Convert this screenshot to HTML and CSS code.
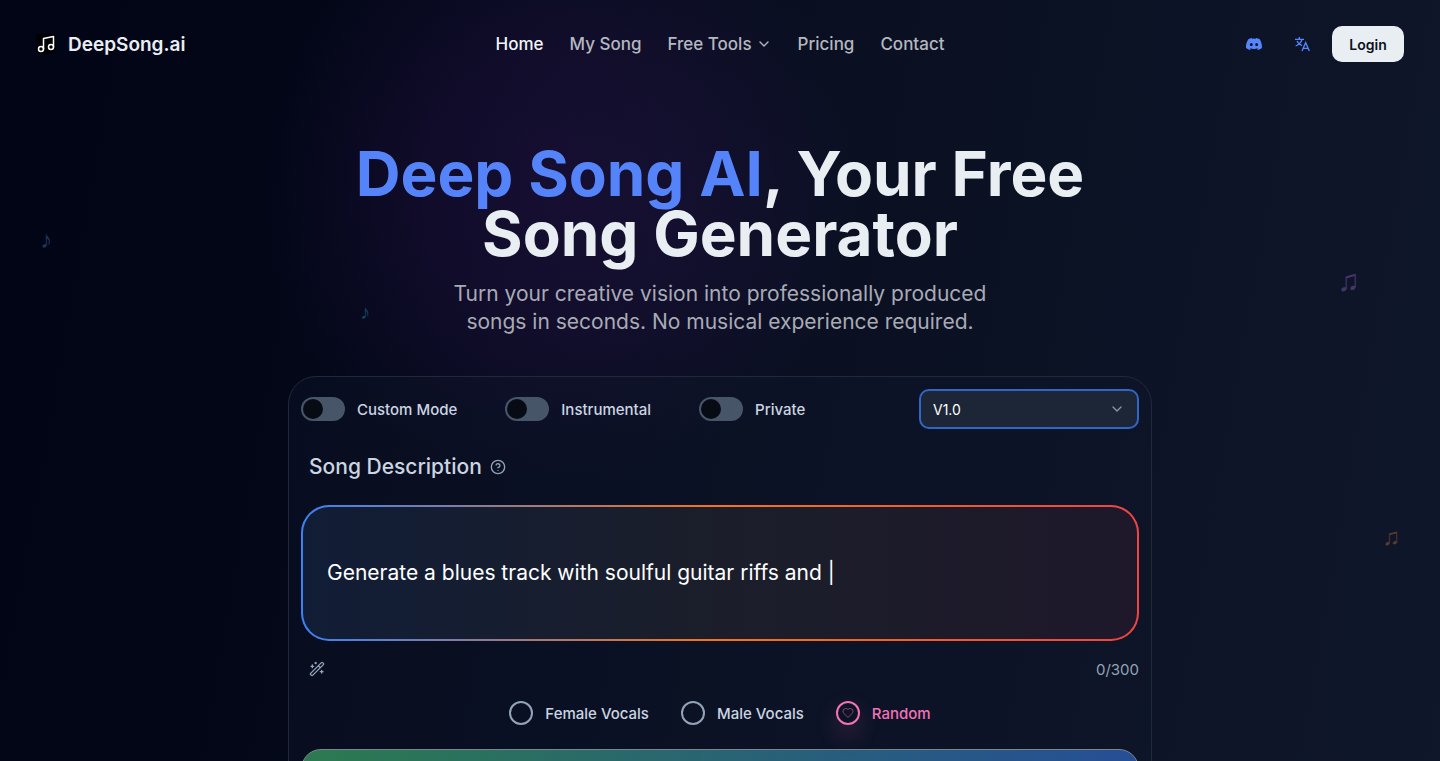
FILE: index.html
```html
<!DOCTYPE html>
<html lang="en">
    <head>
        <meta charset="utf-8">
        <meta name="viewport" content="width=device-width, initial-scale=1">
        <title>DeepSong.ai</title>
        <link rel="stylesheet" href="styles.css">
    </head>
    <body>
        <div class="page">
            <div class="glow"></div>
            <!--Floating notes-->
            <span class="note note-blue" aria-hidden="true">♪</span>
            <span class="note note-cyan" aria-hidden="true">♪</span>
            <span class="note note-purple" aria-hidden="true">♫</span>
            <span class="note note-orange" aria-hidden="true">♫</span>

            <header>
                <a class="brand" href="#">
                    <svg class="logo" viewBox="0 0 20 20" fill="none" stroke="#fff" stroke-width="1.5" stroke-linecap="round" stroke-linejoin="round">
                        <rect width="20" height="20" rx="2" fill="#000" stroke="none"/>
                        <path d="M7.5 15V4.5L17.5 2.5V13"/>
                        <circle cx="5" cy="15" r="2.5"/>
                        <circle cx="15" cy="13" r="2.5"/>
                    </svg>
                    DeepSong.ai
                </a>
                <nav>
                    <a class="active" href="#">Home</a>
                    <a href="#">My Song</a>
                    <a href="#">Free Tools
                        <svg class="chevron" viewBox="0 0 24 24"><path d="m6 9 6 6 6-6"/></svg>
                    </a>
                    <a href="#">Pricing</a>
                    <a href="#">Contact</a>
                </nav>
                <div class="actions">
                    <a class="icon-link" href="#" aria-label="Discord">
                        <svg viewBox="0 0 24 24" fill="currentColor"><path d="M20.3 4.4A19.8 19.8 0 0 0 15.4 2.9l-.6 1.2a18.3 18.3 0 0 0-5.5 0l-.6-1.2a19.7 19.7 0 0 0-4.9 1.5C.5 9-.3 13.6.1 18.1a20 20 0 0 0 6 3l1.2-2-1.9-.9.4-.3a14.200 14.200 0 0 0 12.200 0l.4.3-1.900.9 1.300 2a19.900 19.900 0 0 0 6-3c.5-5.200-.8-9.700-3.500-13.700zM8 15.300c-1.200 0-2.200-1.100-2.200-2.400s1-2.400 2.200-2.400 2.200 1.100 2.200 2.400-1 2.400-2.200 2.400zm8 0c-1.200 0-2.200-1.100-2.200-2.400s1-2.400 2.200-2.400 2.200 1.100 2.200 2.400-1 2.400-2.200 2.400z"/></svg>
                    </a>
                    <button class="icon-link" type="button" aria-label="Language">
                        <svg viewBox="0 0 24 24" fill="none" stroke="currentColor" stroke-width="2"><path d="M1.5 5H15M8 1.5V5M12 5C11 9.5 7 13 2.5 15M4.5 7.5C6 11 8.5 13 12 14.5M12 22.5 17.5 10 23 22.5M13.5 18.5H21.5"/></svg>
                    </button>
                    <button class="login" type="button">Login</button>
                </div>
            </header>

            <main>
                <h1><span>Deep Song AI</span>, Your Free<br>Song Generator</h1>
                <p class="lead">Turn your creative vision into professionally produced<br>songs in seconds. No musical experience required.</p>

                <form class="card">
                    <div class="options">
                        <label class="switch"><input type="checkbox">Custom Mode</label>
                        <label class="switch"><input type="checkbox">Instrumental</label>
                        <label class="switch"><input type="checkbox">Private</label>
                        <div class="version">
                            <select aria-label="Version">
                                <option>V1.0</option>
                            </select>
                            <svg class="chevron" viewBox="0 0 24 24"><path d="m6 9 6 6 6-6"/></svg>
                        </div>
                    </div>

                    <div class="field-title">
                        <label for="description">Song Description</label>
                        <svg viewBox="0 0 24 24" fill="none" stroke="currentColor" stroke-width="2" stroke-linecap="round" stroke-linejoin="round"><circle cx="12" cy="12" r="10"/><path d="M9.1 9a3 3 0 0 1 5.8 1c0 2-3 3-3 3M12 17h.01"/></svg>
                    </div>
                    <div class="field">
                        <textarea id="description" maxlength="300" placeholder="Generate a blues track with soulful guitar riffs and |"></textarea>
                    </div>
                    <div class="field-foot">
                        <button class="wand" type="button" aria-label="Random idea">
                            <svg viewBox="0 0 24 24" fill="none" stroke="currentColor" stroke-width="2" stroke-linecap="round" stroke-linejoin="round"><path d="m21.6 3.6-1.2-1.2a1.2 1.2 0 0 0-1.7 0L2.4 18.6a1.2 1.2 0 0 0 0 1.7l1.3 1.3a1.2 1.2 0 0 0 1.7 0L21.6 5.4a1.2 1.2 0 0 0 0-1.8M14 7l3 3M5 6v4M19 14v4M10 2v2M7 8H3M21 16h-4M11 3H9"/></svg>
                        </button>
                        <span>0/300</span>
                    </div>

                    <div class="vocals">
                        <label><input type="radio" name="vocals">Female Vocals</label>
                        <label><input type="radio" name="vocals">Male Vocals</label>
                        <label class="random">
                            <input type="radio" name="vocals" checked>
                            <svg viewBox="0 0 24 24"><path d="M19 14c1.5-1.5 3-3.2 3-5.5A5.5 5.5 0 0 0 16.5 3c-1.8 0-3 .5-4.5 2-1.5-1.5-2.7-2-4.5-2A5.5 5.5 0 0 0 2 8.5c0 2.3 1.5 4 3 5.5l7 7z"/></svg>
                            Random
                        </label>
                    </div>
                    <button class="generate" type="submit" aria-label="Generate"></button>
                </form>
            </main>
        </div>
    </body>
</html>
```
FILE: styles.css
```css
* {
    box-sizing: border-box;
}
html {
    scrollbar-width: none;
    background-color: #020617;
}
body {
    margin: 0;
    font-family: Inter, "Open Sans", sans-serif;
    font-size: 17px;
    color: #e9eef3;
}
a {
    color: inherit;
    text-decoration: none;
}
button, select, textarea {
    font: inherit;
    color: inherit;
}
.page {
    position: relative;
    overflow: hidden;
    min-height: 100vh;
    background: linear-gradient(100deg, #020516 0%, #020617 18%, #0a1022 55%, #0f172a 100%);
}
.glow {
    position: absolute;
    top: -110px;
    left: 18%;
    width: 600px;
    height: 600px;
    background: radial-gradient(closest-side, rgba(88, 28, 135, 0.2), rgba(88, 28, 135, 0.14) 45%, rgba(88, 28, 135, 0));
}
.note {
    position: absolute;
    font-family: "Liberation Sans", sans-serif;
    line-height: 1;
    opacity: 0.3;
}
.note-blue {
    top: 228px;
    left: 40px;
    font-size: 24px;
    color: #60a5fa;
}
.note-cyan {
    top: 302px;
    left: 25%;
    font-size: 20px;
    color: #22d3ee;
}
.note-purple {
    top: 266px;
    right: 80px;
    font-size: 30px;
    color: #c084fc;
}
.note-orange {
    top: 525px;
    right: 40px;
    font-size: 24px;
    color: #fb923c;
}

/* header */
header {
    position: relative;
    display: grid;
    grid-template-columns: 1fr auto 1fr;
    align-items: center;
    padding: 26px 36px;
}
.brand {
    display: flex;
    align-items: center;
    gap: 12px;
    font-size: 19px;
    font-weight: 600;
}
.logo {
    width: 20px;
    height: 20px;
}
nav {
    display: flex;
    gap: 26px;
    font-weight: 500;
    color: #b4b8c0;
}
nav a {
    display: flex;
    align-items: center;
    gap: 4px;
}
nav .active {
    color: #f1f5f9;
}
.chevron {
    width: 16px;
    height: 16px;
    fill: none;
    stroke: currentColor;
    stroke-width: 2;
    stroke-linecap: round;
    stroke-linejoin: round;
}
.actions {
    display: flex;
    justify-content: flex-end;
    align-items: center;
    gap: 12px;
}
.icon-link {
    display: flex;
    align-items: center;
    justify-content: center;
    width: 36px;
    height: 36px;
    padding: 0;
    border: 0;
    background: none;
    color: #5686ff;
}
.icon-link svg {
    width: 16px;
    height: 16px;
}
.login {
    width: 72px;
    height: 36px;
    padding: 0;
    border: 0;
    border-radius: 10px;
    background-color: #e9eef3;
    color: #0a1022;
    font-size: 14px;
    font-weight: 600;
}

/* hero */
main {
    position: relative;
    max-width: 912px;
    margin: 0 auto;
    padding: 56px 24px 48px;
    text-align: center;
}
h1 {
    margin: 0;
    font-size: 62px;
    line-height: 60px;
    font-weight: 700;
}
h1 span {
    color: #5584fa;
}
.lead {
    margin: 16px 0 40px;
    font-size: 21px;
    line-height: 28px;
    color: #a8abb5;
}

/* generator form */
.card {
    padding: 12px;
    border: 1px solid #202939;
    border-radius: 28px;
    background-color: rgba(15, 23, 42, 0.4);
    text-align: left;
    color: #cbd5e1;
}
.options {
    display: flex;
    align-items: center;
    gap: 48px;
    font-size: 15px;
    font-weight: 500;
}
.switch {
    display: flex;
    align-items: center;
    gap: 12px;
}
.switch input {
    appearance: none;
    width: 44px;
    height: 24px;
    margin: 0;
    padding: 2px;
    border-radius: 12px;
    background-color: #475569;
}
.switch input::before {
    content: "";
    display: block;
    width: 20px;
    height: 20px;
    border-radius: 50%;
    background-color: #070c14;
}
.switch input:checked::before {
    margin-left: 20px;
}
.version {
    position: relative;
    width: 220px;
    margin-left: auto;
}
.version select {
    appearance: none;
    display: block;
    width: 100%;
    height: 40px;
    padding: 0 12px;
    border: 2px solid #3067c4;
    border-radius: 10px;
    background-color: #1c2636;
    color: #fff;
    font-size: 14px;
    font-weight: 400;
}
.version .chevron {
    position: absolute;
    top: 12px;
    right: 14px;
    color: #8d96a3;
    pointer-events: none;
}
.field-title {
    display: flex;
    align-items: center;
    gap: 8px;
    padding: 24px 8px;
    font-size: 21px;
    line-height: 28px;
    font-weight: 500;
}
.field-title svg {
    width: 16px;
    height: 16px;
    color: #94a3b8;
}
.field {
    border: 2px solid transparent;
    border-radius: 28px;
    background: linear-gradient(to right, #111d36, #1b1e2a 50%, #1e182a) padding-box,
        linear-gradient(to right, #3b82f6, #f97316 50%, #ef4444) border-box;
}
.field textarea {
    display: block;
    width: 100%;
    height: 132px;
    padding: 52px 24px;
    border: 0;
    outline: 0;
    resize: none;
    background: none;
    color: #fff;
    font-size: 21px;
    line-height: 28px;
}
.field textarea::placeholder {
    color: #fff;
}
.field-foot {
    display: flex;
    align-items: center;
    justify-content: space-between;
    height: 56px;
    padding-left: 8px;
    font-size: 15px;
    color: #94a3b8;
}
.wand {
    padding: 0;
    border: 0;
    background: none;
    color: #94a3b8;
}
.wand svg {
    display: block;
    width: 16px;
    height: 16px;
}
.vocals {
    display: flex;
    justify-content: center;
    gap: 32px;
    padding: 4px 0 24px;
    font-size: 15px;
    font-weight: 500;
}
.vocals label {
    position: relative;
    display: flex;
    align-items: center;
    gap: 12px;
}
.vocals input {
    appearance: none;
    width: 24px;
    height: 24px;
    margin: 0;
    border: 2px solid #94a3b8;
    border-radius: 50%;
}
.vocals .random {
    color: #f472b6;
}
.vocals .random input {
    border-color: #f472b6;
    box-shadow: 0 10px 24px rgba(244, 114, 182, 0.2);
}
.vocals svg {
    position: absolute;
    left: 6px;
    width: 12px;
    height: 12px;
    fill: none;
    stroke: #8a4675;
    stroke-width: 2;
}
.generate {
    display: block;
    width: 100%;
    height: 56px;
    border: 1px solid #7b858f;
    border-radius: 20px;
    background: linear-gradient(to right, #2c7a50, #264e96);
}
```
